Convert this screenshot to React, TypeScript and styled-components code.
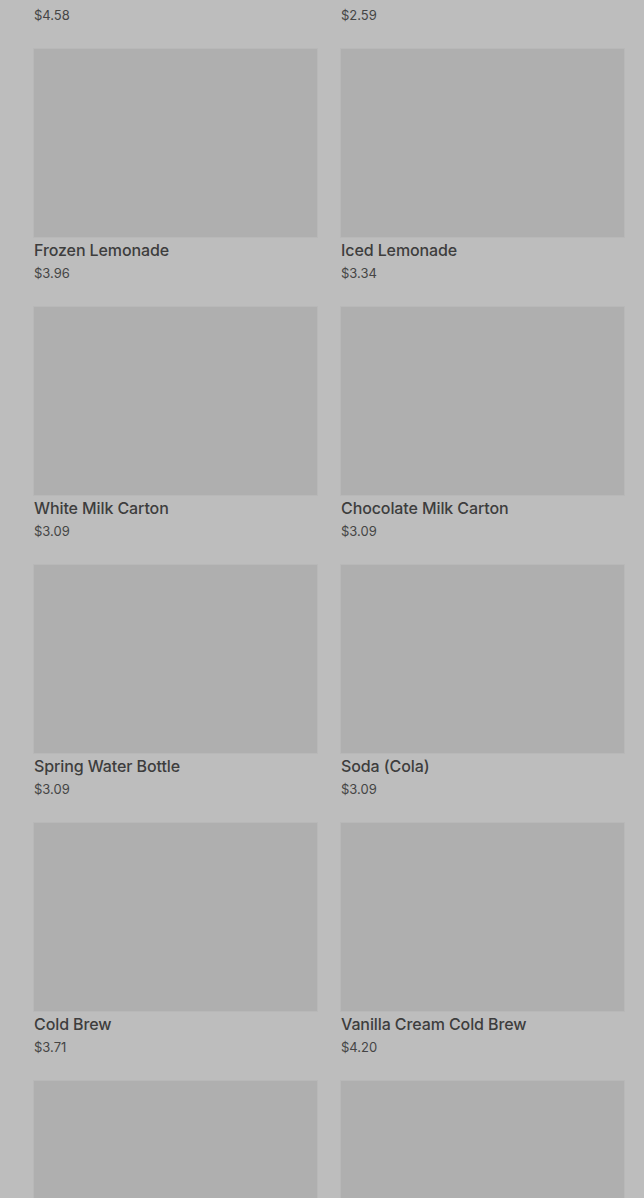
import React from "react";
import styled, { createGlobalStyle } from "styled-components";

const GlobalStyle = createGlobalStyle`
  html, body {
    margin: 0;
    padding: 0;
    background: #bdbdbd;
    font-family: Inter, Roboto, "Liberation Sans", Arial, sans-serif;
  }
  body {
    height: 1198px;
    overflow: hidden;
  }
`;

const Page = styled.div`
  background: #bdbdbd;
  min-height: 1198px;
  overflow: hidden;
`;

const Grid = styled.div`
  display: grid;
  grid-template-columns: repeat(2, 283px);
  column-gap: 24px;
  row-gap: 25px;
  padding: 0 20px 0 34px;
  margin-top: -209px;
`;

const Card = styled.div`
  display: flex;
  flex-direction: column;
`;

const Thumb = styled.div`
  height: 188px;
  background: #afafaf;
  box-shadow: 0 0 0 1px #b8b8b8;
`;

const Title = styled.div`
  margin-top: 3px;
  font-size: 16px;
  line-height: 20px;
  font-weight: 500;
  color: #3d3d3d;
  letter-spacing: -0.1px;
`;

const Price = styled.div`
  margin-top: 4px;
  font-size: 13px;
  line-height: 18px;
  color: #454545;
`;

interface Product {
  name: string;
  price: string;
}

const products: Array<Product> = [
  { name: "Pink Lemonade", price: "$4.58" },
  { name: "Iced Tea", price: "$2.59" },
  { name: "Frozen Lemonade", price: "$3.96" },
  { name: "Iced Lemonade", price: "$3.34" },
  { name: "White Milk Carton", price: "$3.09" },
  { name: "Chocolate Milk Carton", price: "$3.09" },
  { name: "Spring Water Bottle", price: "$3.09" },
  { name: "Soda (Cola)", price: "$3.09" },
  { name: "Cold Brew", price: "$3.71" },
  { name: "Vanilla Cream Cold Brew", price: "$4.20" },
  { name: "Iced Coffee", price: "$3.29" },
  { name: "Iced Latte", price: "$4.49" },
];

const ProductCard = ({ name, price }: Product) => (
  <Card>
    <Thumb />
    <Title>{name}</Title>
    <Price>{price}</Price>
  </Card>
);

export default function App() {
  return (
    <Page>
      <GlobalStyle />
      <Grid>
        {products.map(product => (
          <ProductCard key={product.name} {...product} />
        ))}
      </Grid>
    </Page>
  );
}
